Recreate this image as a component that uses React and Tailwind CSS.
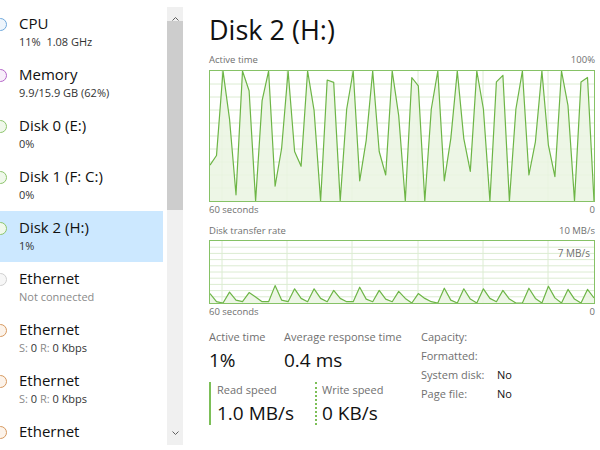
import React from "react";

const activeTime = [
  27.6, 35, 100, 63.2, 4.8, 100, 84.8, 0, 77.2, 100,
  11.4, 40.4, 100, 38.1, 26.7, 100, 69.5, 0, 93.1, 91.2,
  0, 70.8, 100, 15.5, 46.7, 100, 38.1, 20, 100, 65.7,
  0, 95, 88.6, 0, 70.8, 100, 15.5, 48, 100, 48,
  22.8, 100, 70.8, 0, 91.6, 96.7, 0, 70.8, 100, 20,
  45.5, 100, 42.9, 18.8, 100, 73.3, 0, 91.6, 95, 0,
];

// pixels above the bottom of a 64px tall chart
const transfer = [
  9.7, 1.3, 0, 11.3, 3, 1.3, 10.7, 6.3, 1.3, 1.3,
  18, 3, 1.3, 14.7, 4.7, 1.3, 14.7, 4.7, 1.3, 13,
  4.7, 1.3, 1.3, 16.3, 4, 1.3, 13, 4, 1.3, 12,
  4.7, 0, 9.7, 4.7, 1.3, 0, 15.3, 3, 0, 14.7,
  4, 0, 14.7, 4.7, 1.3, 13, 4, 0, 0, 15.3,
  4.7, 0, 17.3, 5.3, 0, 14, 4, 0, 14, 5.3,
];

const items = [
  { name: "CPU", sub: "11%  1.08 GHz", ring: "border-[#6fa8dc] bg-[#eef5fc]" },
  { name: "Memory", sub: "9.9/15.9 GB (62%)", ring: "border-[#b565c9] bg-[#f7eefa]" },
  { name: "Disk 0 (E:)", sub: "0%", ring: "border-[#8cc56c] bg-[#f0f8eb]" },
  { name: "Disk 1 (F: C:)", sub: "0%", ring: "border-[#8cc56c] bg-[#f0f8eb]" },
  { name: "Disk 2 (H:)", sub: "1%", ring: "border-[#8cc56c] bg-[#f0f8eb]", active: true },
  { name: "Ethernet", sub: "Not connected", ring: "border-[#cfcfcf] bg-[#f7f7f7]", muted: true },
  { name: "Ethernet", net: true, ring: "border-[#d6985f] bg-[#fcf3ea]" },
  { name: "Ethernet", net: true, ring: "border-[#d6985f] bg-[#fcf3ea]" },
  // last one is scrolled off below its title
  { name: "Ethernet", ring: "border-[#d6985f] bg-[#fcf3ea]" },
];

const SideItem = ({ item }) => (
  <div className={`flex h-[51px] pt-[5.5px] ${item.active ? "bg-[#cce8ff]" : ""}`}>
    <div className={`ml-[-6px] mt-[5.5px] h-[13px] w-[13px] shrink-0 rounded-full border-[1.5px] ${item.ring}`} />
    <div className="ml-[12px]">
      <div className="text-[15px] leading-[20px] text-[#111]">{item.name}</div>
      {(item.sub || item.net) && (
        <div className={`mt-[1px] whitespace-pre text-[11px] leading-[15px] ${item.muted ? "text-[#8a8a8a]" : "text-[#333]"}`}>
          {item.net ? (
            <>
              <span className="text-[#8a8a8a]">S: </span>0 <span className="text-[#8a8a8a]">R: </span>0 Kbps
            </>
          ) : (
            item.sub
          )}
        </div>
      )}
    </div>
  </div>
);

const Chart = ({ data, max, height, rows, label }) => {
  const w = 384;
  const h = height - 2;
  const step = w / (data.length - 1);
  const line = data
    .map((v, i) => `${i ? "L" : "M"}${(i * step).toFixed(1)},${(h - (v / max) * h).toFixed(1)}`)
    .join(" ");
  const area = `${line} L${w},${h} L0,${h} Z`;
  const hLines = Array.from({ length: rows - 1 }, (_, i) => ((i + 1) * h) / rows);
  const vLines = [12, 77, 142, 208, 273, 338];

  return (
    <div className="relative border border-[#86c266]" style={{ height }}>
      <svg className="block h-full w-full" viewBox={`0 0 ${w} ${h}`} preserveAspectRatio="none">
        {hLines.map((y) => (
          <line key={y} x1="0" x2={w} y1={y} y2={y} stroke="#dcecd2" strokeWidth="1" />
        ))}
        {vLines.map((x) => (
          <line key={x} x1={x} x2={x} y1="0" y2={h} stroke="#dcecd2" strokeWidth="1" />
        ))}
        <path d={area} fill="#eaf5e2" fillOpacity="0.85" />
        <path d={line} fill="none" stroke="#6db546" strokeWidth="1.2" strokeLinejoin="round" />
      </svg>
      {label && (
        <span className="absolute right-[4px] top-[6px] text-[10px] leading-[12px] text-[#707070]">{label}</span>
      )}
    </div>
  );
};

const Stat = ({ label, value, className = "" }) => (
  <div className={className}>
    <div className="text-[11px] leading-[14px] text-[#707070]">{label}</div>
    <div className="mt-[4px] text-[19px] leading-[24px] text-[#111]">{value}</div>
  </div>
);

export default function App() {
  return (
    <div className="flex h-[450px] w-[600px] overflow-hidden bg-white font-['Open_Sans','Noto_Sans',sans-serif]">
      {/* Sidebar list */}
      <div className="w-[163px] shrink-0 overflow-hidden pt-[7px]">
        {items.map((item, i) => (
          <SideItem key={i} item={item} />
        ))}
      </div>

      {/* Scrollbar */}
      <div className="ml-[4px] mt-[7px] flex h-[438px] w-[16px] shrink-0 flex-col bg-[#f0f0f0]">
        <div className="flex h-[14px] items-end justify-center">
          <svg width="7" height="4" viewBox="0 0 7 4">
            <path d="M0.5 3.5 L3.5 0.5 L6.5 3.5" fill="none" stroke="#606060" strokeWidth="1" />
          </svg>
        </div>
        <div className="h-[189px] bg-[#cdcdcd]" />
        <div className="flex-1" />
        <div className="flex h-[14px] items-start justify-center">
          <svg width="7" height="4" viewBox="0 0 7 4">
            <path d="M0.5 0.5 L3.5 3.5 L6.5 0.5" fill="none" stroke="#606060" strokeWidth="1" />
          </svg>
        </div>
      </div>

      {/* Detail panel */}
      <div className="ml-[26px] w-[386px] shrink-0 pt-[11.5px]">
        <h1 className="text-[27px] leading-[36px] text-[#111]">Disk 2 (H:)</h1>

        <div className="mt-[6px] flex justify-between text-[9.5px] leading-[12px] text-[#707070]">
          <span>Active time</span>
          <span>100%</span>
        </div>
        <div className="mt-[4px]">
          <Chart data={activeTime} max={100} height={132} rows={10} />
        </div>
        <div className="mt-[2.5px] flex justify-between text-[9.5px] leading-[12px] text-[#707070]">
          <span>60 seconds</span>
          <span>0</span>
        </div>

        <div className="mt-[8.5px] flex justify-between text-[9.5px] leading-[12px] text-[#707070]">
          <span>Disk transfer rate</span>
          <span>10 MB/s</span>
        </div>
        <div className="mt-[3px]">
          <Chart data={transfer} max={64} height={64} rows={10} label="7 MB/s" />
        </div>
        <div className="mt-[2px] flex justify-between text-[9.5px] leading-[12px] text-[#707070]">
          <span>60 seconds</span>
          <span>0</span>
        </div>

        {/* Stats */}
        <div className="mt-[12px] flex">
          <div className="w-[212px]">
            <div className="flex">
              <Stat label="Active time" value="1%" className="w-[75px]" />
              <Stat label="Average response time" value="0.4 ms" />
            </div>
            <div className="mt-[10px] flex">
              <div className="w-[106px] border-l-2 border-[#7cbf58] pl-[6px]">
                <Stat label="Read speed" value="1.0 MB/s" className="pt-[1px]" />
              </div>
              <div className="border-l-2 border-dotted border-[#7cbf58] pl-[5px]">
                <Stat label="Write speed" value="0 KB/s" className="pt-[1px]" />
              </div>
            </div>
          </div>
          <div className="-mt-[3px] text-[11px] leading-[19.2px]">
            <div className="flex">
              <span className="w-[76px] text-[#707070]">Capacity:</span>
              <span className="text-[#111]"></span>
            </div>
            <div className="flex">
              <span className="w-[76px] text-[#707070]">Formatted:</span>
              <span className="text-[#111]"></span>
            </div>
            <div className="flex">
              <span className="w-[76px] text-[#707070]">System disk:</span>
              <span className="text-[#111]">No</span>
            </div>
            <div className="flex">
              <span className="w-[76px] text-[#707070]">Page file:</span>
              <span className="text-[#111]">No</span>
            </div>
          </div>
        </div>
      </div>
    </div>
  );
}
